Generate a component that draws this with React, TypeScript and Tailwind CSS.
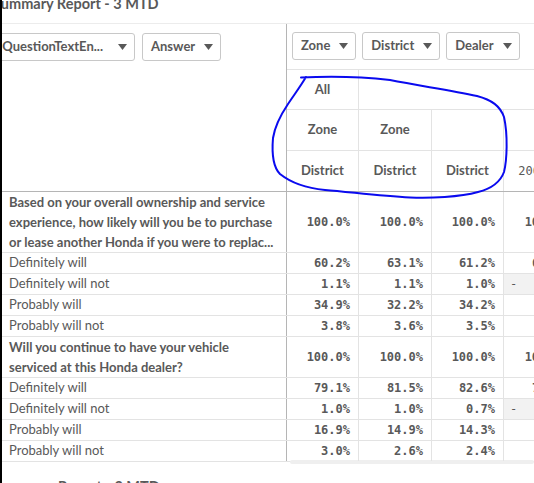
import clsx from "clsx";

type Row = { label: string; values: (string | null)[] };

const widths = ["w-[72px]", "w-[73px]", "w-[72px]", "w-[73px]"];

const blocks: { question: string[]; tall: string; total: string[]; rows: Row[] }[] = [
    {
        question: [
            "Based on your overall ownership and service",
            "experience, how likely will you be to purchase",
            "or lease another Honda if you were to replac...",
        ],
        tall: "h-[61px]",
        total: ["100.0%", "100.0%", "100.0%", "100.0%"],
        rows: [
            { label: "Definitely will", values: ["60.2%", "63.1%", "61.2%", "66.7%"] },
            { label: "Definitely will not", values: ["1.1%", "1.1%", "1.0%", null] },
            { label: "Probably will", values: ["34.9%", "32.2%", "34.2%", "8.3%"] },
            { label: "Probably will not", values: ["3.8%", "3.6%", "3.5%", "9.1%"] },
        ],
    },
    {
        question: ["Will you continue to have your vehicle", "serviced at this Honda dealer?"],
        tall: "h-[41px]",
        total: ["100.0%", "100.0%", "100.0%", "100.0%"],
        rows: [
            { label: "Definitely will", values: ["79.1%", "81.5%", "82.6%", "75.0%"] },
            { label: "Definitely will not", values: ["1.0%", "1.0%", "0.7%", null] },
            { label: "Probably will", values: ["16.9%", "14.9%", "14.3%", "8.3%"] },
            { label: "Probably will not", values: ["3.0%", "2.6%", "2.4%", "8.3%"] },
        ],
    },
];

function Caret() {
    return (
        <svg width="9" height="6" viewBox="0 0 9 6" className="shrink-0">
            <polygon points="0,0 9,0 4.5,6" fill="#595959" />
        </svg>
    );
}

function Pill({ label }: { label: string }) {
    return (
        <div className="flex items-center h-[28px] shrink-0 border border-[#c8c8c8] rounded-[3px] bg-white pl-[8px] pr-[7px] gap-[9px] text-[13px] font-bold text-[#595959]">
            <span>{label}</span>
            <Caret />
        </div>
    );
}

function Cells({ values, bold = true }: { values: (string | null)[]; bold?: boolean }) {
    return (
        <>
            {values.map((v, i) => (
                <div
                    key={i}
                    className={clsx(
                        "flex items-center shrink-0 h-full border-r border-[#e3e3e3] font-['DejaVu_Sans_Mono',monospace] text-[12px]",
                        widths[i],
                        v === null ? "justify-start pl-[6px] bg-[#f2f2f2]" : "justify-end pr-[8px]",
                        bold && v !== null && "font-bold"
                    )}
                >
                    {v === null ? "-" : v}
                </div>
            ))}
        </>
    );
}

export default function App() {
    return (
        <div className="relative w-[534px] h-[483px] overflow-hidden bg-white border-l-2 border-black font-['Lato',sans-serif] text-[#595959]">
            {/* title */}
            <div className="h-[24px] border-b border-[#ececec] overflow-hidden">
                <div className="-mt-[5px] -ml-[9px] leading-[17px] text-[14.5px] font-bold whitespace-nowrap">
                    Summary Report - 3 MTD
                </div>
            </div>

            {/* filters + header */}
            <div className="flex h-[167px]">
                <div className="w-[285px] shrink-0 border-r border-[#b5b5b5] overflow-hidden pt-[9px]">
                    <div className="flex gap-[7px] -ml-[17px]">
                        <div className="flex items-center justify-end w-[150px] h-[28px] shrink-0 border border-[#c8c8c8] rounded-[3px] bg-white pr-[7px] gap-[15px] text-[13px] font-bold text-[#595959] whitespace-nowrap overflow-hidden">
                            <span>QuestionTextEn...</span>
                            <Caret />
                        </div>
                        <Pill label="Answer" />
                    </div>
                </div>
                <div className="flex-1 min-w-0 flex flex-col">
                    <div className="h-[46px] border-b border-[#e3e3e3] flex gap-[6px] pl-[5px] pt-[8px]">
                        <Pill label="Zone" />
                        <Pill label="District" />
                        <Pill label="Dealer" />
                    </div>
                    <div className="flex h-[40px] border-b border-[#e3e3e3] text-[13px] font-bold">
                        <div className="w-[72px] shrink-0 border-r border-[#e3e3e3] flex items-center justify-center">All</div>
                    </div>
                    <div className="flex h-[41px] border-b border-[#e3e3e3] text-[13px] font-bold">
                        <div className="w-[72px] shrink-0 border-r border-[#e3e3e3] flex items-center justify-center">Zone</div>
                        <div className="w-[73px] shrink-0 border-r border-[#e3e3e3] flex items-center justify-center">Zone</div>
                        <div className="w-[72px] shrink-0 border-r border-[#e3e3e3]" />
                        <div className="w-[73px] shrink-0 border-r border-[#e3e3e3]" />
                    </div>
                    <div className="flex flex-1 text-[13px] font-bold">
                        <div className="w-[72px] shrink-0 border-r border-[#e3e3e3] flex items-center justify-center">District</div>
                        <div className="w-[73px] shrink-0 border-r border-[#e3e3e3] flex items-center justify-center">District</div>
                        <div className="w-[72px] shrink-0 border-r border-[#e3e3e3] flex items-center justify-center">District</div>
                        <div className="w-[73px] shrink-0 border-r border-[#e3e3e3] flex items-center justify-center font-normal font-['DejaVu_Sans_Mono',monospace] text-[12px] whitespace-nowrap">
                            200117
                        </div>
                    </div>
                </div>
            </div>

            {/* body */}
            <div className="border-t border-[#b5b5b5]">
                {blocks.map((b, bi) => (
                    <div key={bi}>
                        <div className={clsx("flex border-b border-[#e3e3e3]", b.tall)}>
                            <div className="w-[285px] shrink-0 border-r border-[#b5b5b5] pl-[7px] flex flex-col justify-center text-[13px] leading-[20px] font-bold whitespace-nowrap overflow-hidden">
                                {b.question.map((l) => (
                                    <div key={l}>{l}</div>
                                ))}
                            </div>
                            <Cells values={b.total} />
                        </div>
                        {b.rows.map((r) => (
                            <div key={r.label} className="flex h-[21px] border-b border-[#e3e3e3]">
                                <div className="w-[285px] shrink-0 border-r border-[#b5b5b5] pl-[7px] flex items-center text-[13px]">
                                    {r.label}
                                </div>
                                <Cells values={r.values} />
                            </div>
                        ))}
                    </div>
                ))}
            </div>
            <div className="h-[4px] -mt-[2px] ml-[288px] rounded-full bg-[#efefef]" />

            <div className="mt-[14px] ml-[56px] leading-[17px] text-[14.5px] font-bold whitespace-nowrap">
                Report - 3 MTD
            </div>

            {/* hand-drawn highlight */}
            <svg className="absolute left-0 top-0 pointer-events-none" width="534" height="483" viewBox="2 0 534 483">
                <path
                    d="M 301 77.5 C 330 76 360 76.5 390 80 C 420 86 450 90 477 96 C 492 100 500 106 504 117 C 508 135 507 160 504 172 C 500 183 490 189 478 192 C 460 197 430 198.5 410 197.5 C 380 196 350 192 325 190 C 305 188 290 182 280 174 C 272 166 272 150 273 138 C 275 125 282 113 288 104 C 294 95 300 87 306 77"
                    fill="none"
                    stroke="#0a0aef"
                    strokeWidth="2"
                    strokeLinecap="round"
                />
            </svg>
        </div>
    );
}
